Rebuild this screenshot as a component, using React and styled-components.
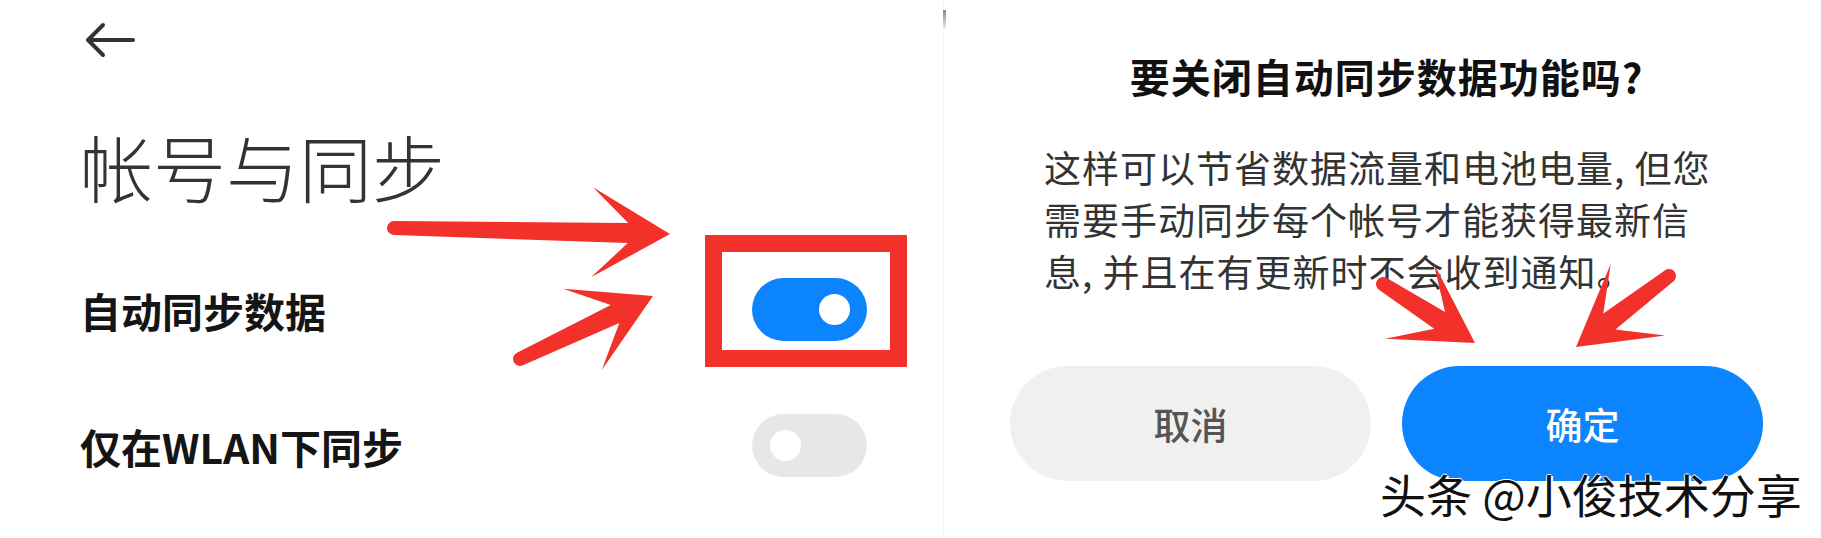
import React from 'react'
import styled, { createGlobalStyle } from 'styled-components'

const GlobalStyle = createGlobalStyle`
    html, body {
        margin: 0;
        padding: 0;
        background: #ffffff;
    }
    body {
        font-family: 'Noto Sans CJK SC', 'Noto Sans', sans-serif;
    }
`

// red annotation arrows drawn over the screenshot
const arrows = [
    { from: [394, 228], to: [670, 234] },
    { from: [520, 359], to: [653, 296] },
    { from: [1383, 284], to: [1475, 343] },
    { from: [1669, 276], to: [1576, 347] },
]

function arrowPath(len) {
    return `M 0 -7 L ${len - 42} -10 L ${len - 78} -45 L ${len} 0 L ${len - 78} 45 L ${len - 42} 10 L 0 7 A 7 7 0 0 1 0 -7 Z`
}

function Toggle({ on }) {
    return (
        <Track on={on ? 1 : 0}>
            <Knob />
        </Track>
    )
}

function App() {
    return (
        <Page>
            <GlobalStyle />
            <SettingsPane>
                <BackButton>
                    <svg width="53" height="36" viewBox="0 0 53 36">
                        <path d="M4 18 H49 M19 3 L4 18 L19 33" fill="none" stroke="#333" strokeWidth="4" strokeLinecap="round" strokeLinejoin="round" />
                    </svg>
                </BackButton>
                <Title>帐号与同步</Title>
                <Rows>
                    <Row>
                        <Label>自动同步数据</Label>
                        <Toggle on />
                    </Row>
                    <Row>
                        <Label>仅在WLAN下同步</Label>
                        <Toggle />
                    </Row>
                </Rows>
            </SettingsPane>

            <DialogPane>
                <DialogTitle>要关闭自动同步数据功能吗?</DialogTitle>
                <DialogBody>
                    <span>这样可以节省数据流量和电池电量, 但您</span>
                    <span>需要手动同步每个帐号才能获得最新信</span>
                    <span>息, 并且在有更新时不会收到通知。</span>
                </DialogBody>
                <ButtonRow>
                    <DialogButton>取消</DialogButton>
                    <DialogButton primary>确定</DialogButton>
                </ButtonRow>
            </DialogPane>

            <Annotations width="1821" height="538" viewBox="0 0 1821 538">
                <rect x="713.5" y="243.5" width="185" height="115" fill="none" stroke="#F3312B" strokeWidth="17" />
                {arrows.map((a, i) => {
                    const dx = a.to[0] - a.from[0]
                    const dy = a.to[1] - a.from[1]
                    const len = Math.sqrt(dx * dx + dy * dy)
                    const angle = (Math.atan2(dy, dx) * 180) / Math.PI
                    return (
                        <path
                            key={i}
                            d={arrowPath(len)}
                            fill="#F3312B"
                            transform={`translate(${a.from[0]} ${a.from[1]}) rotate(${angle})`}
                        />
                    )
                })}
            </Annotations>

            <Watermark>头条 @小俊技术分享</Watermark>
        </Page>
    )
}

export default App

const Page = styled.div`
    position: relative;
    display: flex;
    width: 1821px;
    height: 538px;
    overflow: hidden;
    background: #ffffff;
`

const SettingsPane = styled.div`
    display: flex;
    flex-direction: column;
    width: 943px;
    box-sizing: border-box;
    padding: 22px 76px 0 80px;
`

const BackButton = styled.div`
    display: flex;
    width: 53px;
    height: 36px;
    margin-left: 4px;
`

const Title = styled.h1`
    margin: 71px 0 0;
    font-size: 73px;
    line-height: 73px;
    font-weight: 300;
    color: #333333;
    letter-spacing: 0;
`

const Rows = styled.div`
    display: flex;
    flex-direction: column;
    margin-top: 39px;
`

const Row = styled.div`
    display: flex;
    align-items: center;
    justify-content: space-between;
    height: 136px;
`

const Label = styled.span`
    font-size: 41px;
    font-weight: 700;
    color: #151515;
    padding-top: 2px;
`

const Track = styled.div`
    display: flex;
    align-items: center;
    justify-content: ${p => (p.on ? 'flex-end' : 'flex-start')};
    width: 115px;
    height: 63px;
    box-sizing: border-box;
    padding: 0 ${p => (p.on ? '17px' : '0')} 0 ${p => (p.on ? '0' : '18px')};
    border-radius: 32px;
    background: ${p => (p.on ? '#0C84FE' : '#E7E7E7')};
`

const Knob = styled.div`
    width: 31px;
    height: 31px;
    border-radius: 50%;
    background: #ffffff;
`

const DialogPane = styled.div`
    position: relative;
    display: flex;
    flex-direction: column;
    flex: 1;
    box-sizing: border-box;
    padding: 50px 58px 0 66px;
    border-left: 1px solid #f3f3f3;

    &::before {
        content: '';
        position: absolute;
        left: -1px;
        top: 10px;
        width: 3px;
        height: 18px;
        background: linear-gradient(#8a8a8a, #e6e6e6);
    }
`

const DialogTitle = styled.h2`
    margin: 0;
    text-align: center;
    font-size: 40px;
    line-height: 52px;
    font-weight: 700;
    letter-spacing: 1px;
    color: #111111;
`

const DialogBody = styled.p`
    display: flex;
    flex-direction: column;
    margin: 39px 0 0 34px;
    font-size: 37px;
    line-height: 52px;
    font-weight: 400;
    letter-spacing: 1px;
    color: #333333;
    white-space: nowrap;
`

const ButtonRow = styled.div`
    display: grid;
    grid-template-columns: 1fr 1fr;
    gap: 31px;
    margin-top: 69px;
`

const DialogButton = styled.button`
    height: 115px;
    border: none;
    border-radius: 58px;
    font-family: 'Noto Sans CJK SC', 'Noto Sans', sans-serif;
    font-size: 37px;
    font-weight: 500;
    background: ${p => (p.primary ? '#0C84FE' : '#F0F0F0')};
    color: ${p => (p.primary ? '#ffffff' : '#555555')};
`

const Annotations = styled.svg`
    position: absolute;
    left: 0;
    top: 0;
    pointer-events: none;
`

const Watermark = styled.div`
    position: absolute;
    left: 1380px;
    top: 470px;
    font-size: 46px;
    line-height: 46px;
    font-weight: 400;
    color: #111111;
    white-space: nowrap;
    text-shadow: 2px 1px 0 #ffffff, -1px 0 0 #ffffff, 0 -1px 0 #ffffff;
`
